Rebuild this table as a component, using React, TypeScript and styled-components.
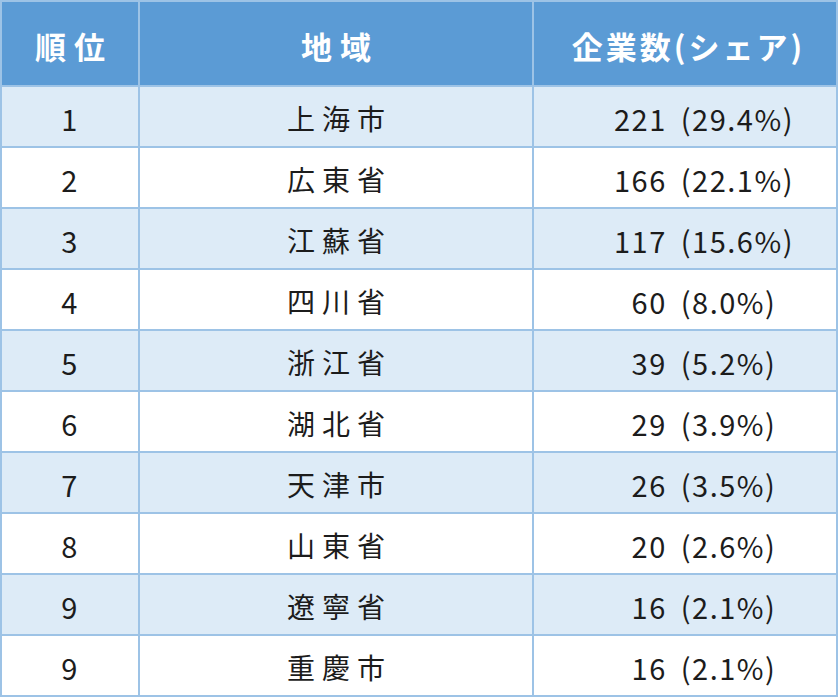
import React from "react";
import styled, { createGlobalStyle } from "styled-components";

const GlobalStyle = createGlobalStyle`
  html, body {
    margin: 0;
    padding: 0;
    background: #ffffff;
  }
  body {
    font-family: "Noto Sans CJK JP", "Noto Sans", sans-serif;
  }
`;

const Table = styled.div`
  width: 838px;
  box-sizing: border-box;
  display: flex;
  flex-direction: column;
  gap: 2px;
  padding: 2px;
  background: #9dc3e6;
`;

const Row = styled.div`
  display: grid;
  grid-template-columns: 136px 392px 1fr;
  gap: 2px;
`;

const HeadCell = styled.div<{ $spacing: number; $shift?: number }>`
  height: 83px;
  background: #5b9bd5;
  color: #ffffff;
  display: flex;
  align-items: center;
  justify-content: center;
  padding-top: 4px;
  padding-left: ${(p) => p.$shift ?? 0}px;
  box-sizing: border-box;
  font-size: 31px;
  font-weight: 700;
  letter-spacing: ${(p) => p.$spacing}px;
  text-indent: ${(p) => p.$spacing}px;
`;

const Cell = styled.div<{ $alt: boolean; $kind: "rank" | "region" | "value" }>`
  height: 59px;
  background: ${(p) => (p.$alt ? "#ddebf7" : "#ffffff")};
  color: #1c1c1c;
  display: flex;
  align-items: center;
  justify-content: center;
  box-sizing: border-box;
  padding-top: 2px;
  font-size: ${(p) => (p.$kind === "region" ? 28 : 29)}px;
  font-weight: 400;
  letter-spacing: ${(p) => (p.$kind === "region" ? 7 : 1.5)}px;
  word-spacing: ${(p) => (p.$kind === "value" ? 6 : 0)}px;
  text-indent: ${(p) => (p.$kind === "region" ? 7 : 0)}px;
  padding-left: ${(p) => (p.$kind === "value" ? 38 : 0)}px;
`;

const data: [string, string, string][] = [
  ["1", "上海市", "221 (29.4%)"],
  ["2", "広東省", "166 (22.1%)"],
  ["3", "江蘇省", "117 (15.6%)"],
  ["4", "四川省", "60 (8.0%)"],
  ["5", "浙江省", "39 (5.2%)"],
  ["6", "湖北省", "29 (3.9%)"],
  ["7", "天津市", "26 (3.5%)"],
  ["8", "山東省", "20 (2.6%)"],
  ["9", "遼寧省", "16 (2.1%)"],
  ["9", "重慶市", "16 (2.1%)"],
];

export default function App() {
  return (
    <>
      <GlobalStyle />
      <Table>
        <Row>
          <HeadCell $spacing={8}>順位</HeadCell>
          <HeadCell $spacing={8}>地域</HeadCell>
          <HeadCell $spacing={3} $shift={4}>企業数(シェア)</HeadCell>
        </Row>
        {data.map(([rank, region, value], i) => (
          <Row key={i}>
            <Cell $alt={i % 2 === 0} $kind="rank">{rank}</Cell>
            <Cell $alt={i % 2 === 0} $kind="region">{region}</Cell>
            <Cell $alt={i % 2 === 0} $kind="value">{value}</Cell>
          </Row>
        ))}
      </Table>
    </>
  );
}
